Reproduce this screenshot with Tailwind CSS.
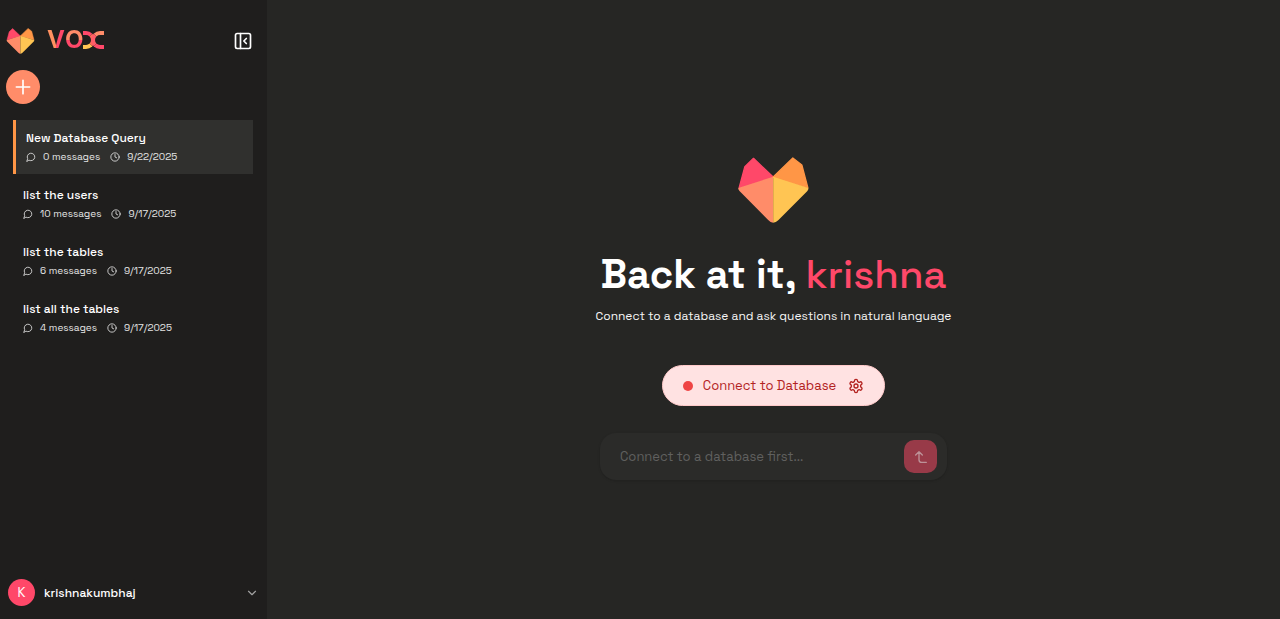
<!DOCTYPE html>
<html lang="en">
<head>
    <meta charset="UTF-8">
    <meta name="viewport" content="width=device-width, initial-scale=1.0">
    <title>VOX</title>
    <script src="https://cdn.jsdelivr.net/npm/@tailwindcss/browser@4"></script>
</head>
<body class="flex min-h-screen bg-[#262624] font-['Space_Grotesk',Inter,sans-serif] text-white">
    <!-- Shared icons -->
    <svg class="hidden" aria-hidden="true">
        <symbol id="mark" viewBox="54 37 212 198">
            <path fill="#ff4869" stroke="#ff4869" stroke-width="4" stroke-linejoin="round" d="M100 41 159 97 57 129 74 66Z"/>
            <path fill="#ff9646" stroke="#ff9646" stroke-width="4" stroke-linejoin="round" d="M218 40 159 97 263 129 245 61Z"/>
            <path fill="#ff8c69" d="M159 96 54 130Q54 135 58 139L144 226Q151 234 159 234Z"/>
            <path fill="#ffc553" d="M159 96 265 130Q265 136 261 140L175 226Q167 234 159 234Z"/>
        </symbol>
        <symbol id="chat" viewBox="0 0 24 24" fill="none" stroke="currentColor" stroke-width="2" stroke-linecap="round" stroke-linejoin="round">
            <path d="M7.9 20A9 9 0 1 0 4 16.1L2 22Z"/>
        </symbol>
        <symbol id="clock" viewBox="0 0 24 24" fill="none" stroke="currentColor" stroke-width="2" stroke-linecap="round" stroke-linejoin="round">
            <circle cx="12" cy="12" r="10"/>
            <path d="M12 6v6l4 2"/>
        </symbol>
    </svg>

    <!-- Sidebar -->
    <aside class="flex w-[267px] shrink-0 flex-col bg-[#1f1e1d]">
        <header class="flex items-center px-[6px] pt-6 pr-[14px]">
            <svg class="h-[26px] w-[29px]"><use href="#mark"/></svg>
            <div class="ml-3 flex flex-1 items-center pb-[2px] font-[Inter,sans-serif] text-2xl leading-8 font-bold" aria-label="VOX">
                <span class="bg-linear-to-r from-[#ff9060] from-50% to-[#ff4869] to-50% bg-clip-text text-transparent">V</span>
                <span class="bg-linear-to-b from-[#ff8c69] from-50% to-[#ff4869] to-50% bg-clip-text text-transparent">O</span>
                <!-- Two mirrored arcs meet back to back as the last letter -->
                <span class="flex h-[18px] items-stretch">
                    <span class="w-3 rounded-l-xs rounded-r-full border-4 border-l-0 border-t-[#ff4869] border-r-[#ff6a58] border-b-[#ffc553]"></span>
                    <span class="-ml-1 w-[13px] rounded-l-full rounded-r-xs border-4 border-r-0 border-t-[#ff8c69] border-b-[#ff4869] border-l-[#ff5c68]"></span>
                </span>
            </div>
            <button type="button" aria-label="Collapse sidebar">
                <svg class="size-5" viewBox="0 0 24 24" fill="none" stroke="currentColor" stroke-width="2" stroke-linecap="round" stroke-linejoin="round">
                    <rect x="3" y="3" width="18" height="18" rx="2"/>
                    <path d="M9 3v18M16 15l-3-3 3-3"/>
                </svg>
            </button>
        </header>

        <button type="button" aria-label="New chat" class="mt-3 ml-[6px] flex size-[34px] items-center justify-center rounded-full bg-[#ff8c69]">
            <svg class="size-5" viewBox="0 0 24 24" fill="none" stroke="currentColor" stroke-width="2" stroke-linecap="round"><path d="M4 12h16M12 4v16"/></svg>
        </button>

        <nav class="mt-4 flex flex-1 flex-col gap-[3px] pr-[14px] pl-[13px]">
            <a href="#" class="border-l-3 border-[#ff9646] bg-[#30302e] px-[10px] pt-[9px] pb-[7px]">
                <span class="block text-xs leading-[18px] font-medium">New Database Query</span>
                <span class="flex items-center text-[10px] leading-5 text-neutral-200">
                    <svg class="mr-[7px] size-[10px]"><use href="#chat"/></svg>0 messages
                    <svg class="mr-[7px] ml-[10px] size-[10px]"><use href="#clock"/></svg>9/22/2025
                </span>
            </a>
            <a href="#" class="px-[10px] pt-[9px] pb-[7px]">
                <span class="block text-xs leading-[18px] font-medium">list the users</span>
                <span class="flex items-center text-[10px] leading-5 text-neutral-200">
                    <svg class="mr-[7px] size-[10px]"><use href="#chat"/></svg>10 messages
                    <svg class="mr-[7px] ml-[10px] size-[10px]"><use href="#clock"/></svg>9/17/2025
                </span>
            </a>
            <a href="#" class="px-[10px] pt-[9px] pb-[7px]">
                <span class="block text-xs leading-[18px] font-medium">list the tables</span>
                <span class="flex items-center text-[10px] leading-5 text-neutral-200">
                    <svg class="mr-[7px] size-[10px]"><use href="#chat"/></svg>6 messages
                    <svg class="mr-[7px] ml-[10px] size-[10px]"><use href="#clock"/></svg>9/17/2025
                </span>
            </a>
            <a href="#" class="px-[10px] pt-[9px] pb-[7px]">
                <span class="block text-xs leading-[18px] font-medium">list all the tables</span>
                <span class="flex items-center text-[10px] leading-5 text-neutral-200">
                    <svg class="mr-[7px] size-[10px]"><use href="#chat"/></svg>4 messages
                    <svg class="mr-[7px] ml-[10px] size-[10px]"><use href="#clock"/></svg>9/17/2025
                </span>
            </a>
        </nav>

        <!-- Account -->
        <button type="button" class="flex items-center px-2 pb-[13px] text-left">
            <span class="flex size-[27px] items-center justify-center rounded-full bg-[#ff4869] text-[13px]">K</span>
            <span class="ml-[9px] flex-1 text-xs font-medium">krishnakumbhaj</span>
            <svg class="size-[14px] text-neutral-400" viewBox="0 0 24 24" fill="none" stroke="currentColor" stroke-width="2" stroke-linecap="round" stroke-linejoin="round"><path d="m6 9 6 6 6-6"/></svg>
        </button>
    </aside>

    <!-- Main -->
    <main class="flex flex-1 flex-col items-center justify-center pt-[18px]">
        <svg class="h-[66px] w-[71px]"><use href="#mark"/></svg>
        <h1 class="mt-7 text-[40px] leading-12 font-semibold">Back at it, <span class="font-medium text-[#ff4869]">krishna</span></h1>
        <p class="mt-[7px] text-xs leading-5 text-neutral-100">Connect to a database and ask questions in natural language</p>

        <button type="button" class="mt-[39px] flex h-[41px] items-center rounded-full border border-red-200 bg-[#ffe2e2] px-5 text-[13px] text-[#b3221f]">
            <span class="mr-[10px] size-[10px] rounded-full bg-[#ef4444]"></span>
            Connect to Database
            <svg class="ml-3 size-4" viewBox="0 0 24 24" fill="none" stroke="currentColor" stroke-width="2" stroke-linecap="round" stroke-linejoin="round">
                <path d="M12.22 2h-.44a2 2 0 0 0-2 2v.18a2 2 0 0 1-1 1.73l-.43.25a2 2 0 0 1-2 0l-.15-.08a2 2 0 0 0-2.73.73l-.22.38a2 2 0 0 0 .73 2.73l.15.1a2 2 0 0 1 1 1.72v.51a2 2 0 0 1-1 1.74l-.15.09a2 2 0 0 0-.73 2.73l.22.38a2 2 0 0 0 2.73.73l.15-.08a2 2 0 0 1 2 0l.43.25a2 2 0 0 1 1 1.73V20a2 2 0 0 0 2 2h.44a2 2 0 0 0 2-2v-.18a2 2 0 0 1 1-1.73l.43-.25a2 2 0 0 1 2 0l.15.08a2 2 0 0 0 2.73-.73l.22-.39a2 2 0 0 0-.73-2.73l-.15-.08a2 2 0 0 1-1-1.74v-.5a2 2 0 0 1 1-1.74l.15-.09a2 2 0 0 0 .73-2.73l-.22-.38a2 2 0 0 0-2.73-.73l-.15.08a2 2 0 0 1-2 0l-.43-.25a2 2 0 0 1-1-1.73V4a2 2 0 0 0-2-2z"/>
                <circle cx="12" cy="12" r="3"/>
            </svg>
        </button>

        <form class="mt-[27px] flex h-[47px] w-full max-w-[347px] items-center rounded-2xl bg-[#2b2b29] pr-[10px] pl-5 shadow-sm">
            <input type="text" aria-label="Question" placeholder="Connect to a database first..." disabled class="min-w-0 flex-1 text-[13px] placeholder:text-[#60605f]">
            <button type="button" aria-label="Send" disabled class="flex size-[33px] items-center justify-center rounded-[10px] bg-[#983a48] text-[#bd9298]">
                <svg class="size-4" viewBox="0 0 24 24" fill="none" stroke="currentColor" stroke-width="2" stroke-linecap="round" stroke-linejoin="round">
                    <path d="m14 9-5-5-5 5M20 20h-7a4 4 0 0 1-4-4V4"/>
                </svg>
            </button>
        </form>
    </main>
</body>
</html>
